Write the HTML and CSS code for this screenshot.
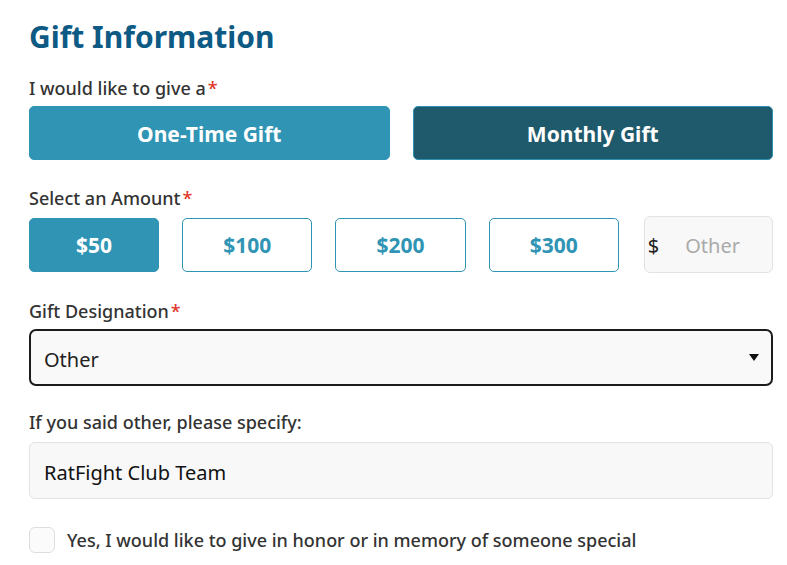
FILE: index.html
```html
<!DOCTYPE html>
<html>
<head>
<meta charset="utf-8">
<link rel="stylesheet" href="styles.css">
</head>
<body>
<main class="form">
  <h1 class="title">Gift Information</h1>

  <div class="label">I would like to give a<span class="req">*</span></div>
  <div class="freq-row">
    <button class="freq freq-active">One-Time Gift</button>
    <button class="freq freq-dark">Monthly Gift</button>
  </div>

  <div class="label label-amount">Select an Amount<span class="req">*</span></div>
  <div class="amount-row">
    <button class="amt amt-active">$50</button>
    <button class="amt">$100</button>
    <button class="amt">$200</button>
    <button class="amt">$300</button>
    <div class="other"><span class="dollar">$</span><span class="other-ph">Other</span></div>
  </div>

  <div class="label label-desig">Gift Designation<span class="req">*</span></div>
  <div class="select">
    <span class="select-val">Other</span>
    <svg class="caret" width="10" height="7" viewBox="0 0 10 7"><path d="M0 0H10L5 7Z" fill="#111"/></svg>
  </div>

  <div class="label label-spec">If you said other, please specify:</div>
  <div class="input">RatFight Club Team</div>

  <label class="check-row">
    <span class="checkbox"></span>
    <span class="check-text">Yes, I would like to give in honor or in memory of someone special</span>
  </label>
</main>
</body>
</html>
```

FILE: styles.css
```css
* { box-sizing: border-box; }
html, body { margin: 0; padding: 0; background: #fff; }
body {
  font-family: "Noto Sans", "Open Sans", sans-serif;
  color: #333;
}
.form {
  width: 744px;
  margin: 0 0 0 29px;
  padding-top: 14px;
  display: flex;
  flex-direction: column;
}
.title {
  margin: 0;
  font-size: 30px;
  line-height: 46px;
  font-weight: 700;
  color: #0d5a85;
}
.label {
  font-size: 18px;
  font-weight: 500;
  line-height: 24px;
  color: #333;
  margin-top: 16px;
}
.req { color: #e0372b; margin-left: 2px; }
.freq-row {
  display: flex;
  gap: 23px;
  margin-top: 6px;
}
.freq {
  flex: 1;
  height: 54px;
  border-radius: 5px;
  font-family: inherit;
  font-size: 21px;
  font-weight: 700;
  color: #fff;
  border: 1px solid #3094b4;
  background: #3094b4;
  padding: 2px 0 0;
}
.freq-dark { background: #1f5a6c; border-color: #2f8fae; }
.label-amount { margin-top: 26px; }
.amount-row {
  display: flex;
  gap: 23px;
  align-items: center;
  margin-top: 6px;
}
.amt {
  width: 131px;
  height: 54px;
  border-radius: 5px;
  border: 1px solid #3094b4;
  background: #fff;
  color: #3094b4;
  font-family: inherit;
  font-size: 21px;
  font-weight: 700;
  padding: 1px 0 0;
}
.amt-active { background: #3094b4; color: #fff; }
.other {
  width: 130px;
  height: 57px;
  margin-left: 2px;
  border: 1px solid #e2e2e2;
  border-radius: 6px;
  background: #f8f8f8;
  display: flex;
  align-items: center;
  padding: 2px 0 0 3px;
  font-size: 20px;
}
.dollar { color: #222; }
.other-ph { color: #aaa; margin-left: 26px; }
.label-desig { margin-top: 26px; }
.select {
  margin-top: 6px;
  height: 57px;
  border: 2px solid #1c1c1c;
  border-radius: 7px;
  background: #f9f9f9;
  display: flex;
  align-items: center;
  justify-content: space-between;
  padding: 0 12px 0 13px;
}
.select-val { font-size: 20px; color: #222; padding-top: 3px; }
.caret { display: block; }
.label-spec { margin-top: 24px; }
.input {
  margin-top: 8px;
  height: 57px;
  border: 1px solid #e2e2e2;
  border-radius: 6px;
  background: #f8f8f8;
  display: flex;
  align-items: center;
  padding: 3px 0 0 14px;
  font-size: 20px;
  color: #111;
}
.check-row {
  display: flex;
  align-items: center;
  gap: 12px;
  margin-top: 28px;
}
.checkbox {
  width: 26px;
  height: 26px;
  border: 1px solid #dedede;
  border-radius: 6px;
  background: #fbfbfb;
}
.check-text {
  font-size: 18px;
  font-weight: 500;
  color: #333;
}
```
